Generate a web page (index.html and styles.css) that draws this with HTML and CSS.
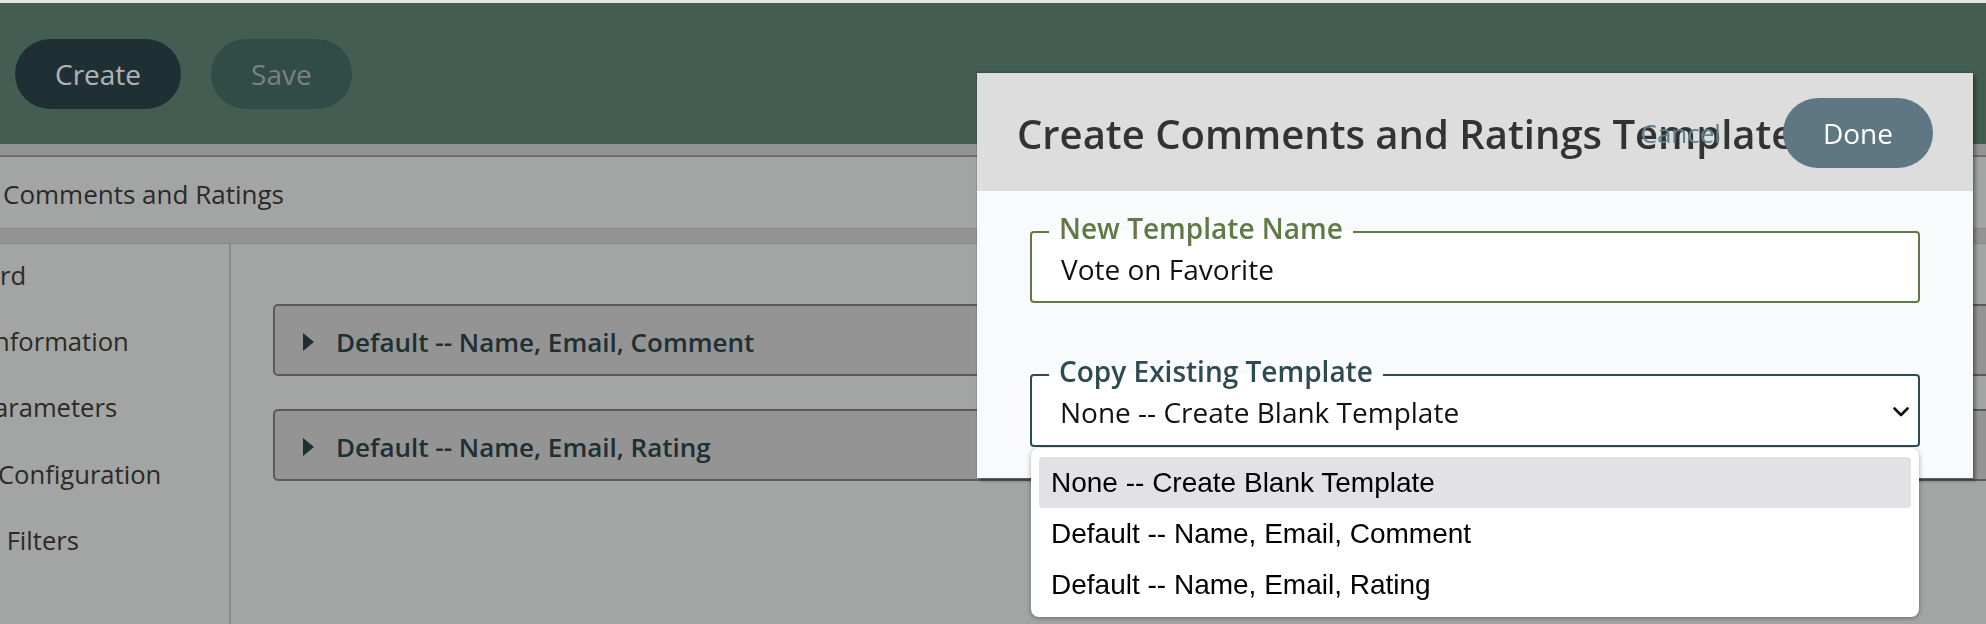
FILE: index.html
```html
<!DOCTYPE html>
<html lang="en">
<head>
<meta charset="utf-8">
<title>Comments and Ratings</title>
<link rel="stylesheet" href="styles.css">
</head>
<body>
  <div class="topstrip"></div>
  <header class="appbar">
    <button class="pill pill-primary">Create</button>
    <button class="pill pill-muted">Save</button>
  </header>
  <div class="subband"></div>
  <div class="pagetitle">Comments and Ratings</div>
  <div class="subband subband-2"></div>
  <main class="workspace">
    <nav class="sidenav">
      <a class="navitem">rd</a>
      <a class="navitem navitem-cut">nformation</a>
      <a class="navitem navitem-cut">arameters</a>
      <a class="navitem navitem-edge">Configuration</a>
      <a class="navitem"> Filters</a>
    </nav>
    <section class="content">
      <div class="acc">
        <svg class="caret" width="11" height="18" viewBox="0 0 11 18"><polygon points="0,0 11,9 0,18" fill="currentColor"/></svg>
        <span>Default -- Name, Email, Comment</span>
      </div>
      <div class="acc">
        <svg class="caret" width="11" height="18" viewBox="0 0 11 18"><polygon points="0,0 11,9 0,18" fill="currentColor"/></svg>
        <span>Default -- Name, Email, Rating</span>
      </div>
    </section>
  </main>

  <div class="backdrop"></div>

  <div class="modal">
    <div class="modal-head">
      <h2 class="modal-title">Create Comments and Ratings Template</h2>
      <button class="link-btn">Cancel</button>
      <button class="pill pill-done">Done</button>
    </div>
    <div class="modal-body">
      <fieldset class="field field-name">
        <legend>New Template Name</legend>
        <div class="textbox">Vote on Favorite</div>
      </fieldset>
      <fieldset class="field field-copy">
        <legend>Copy Existing Template</legend>
        <div class="selectbox">
          <span>None -- Create Blank Template</span>
          <svg class="chevron" width="16" height="10" viewBox="0 0 16 10"><polyline points="1.5,1.5 8,8 14.5,1.5" fill="none" stroke="#111" stroke-width="2.6" stroke-linecap="round" stroke-linejoin="round"/></svg>
        </div>
      </fieldset>
    </div>
  </div>

  <ul class="dropdown">
    <li class="is-active">None -- Create Blank Template</li>
    <li>Default -- Name, Email, Comment</li>
    <li>Default -- Name, Email, Rating</li>
  </ul>
</body>
</html>
```

FILE: styles.css
```css
* { box-sizing: border-box; }

html, body { margin: 0; padding: 0; }

body {
  position: relative;
  width: 1986px;
  height: 624px;
  overflow: hidden;
  font-family: "Open Sans", "Noto Sans", sans-serif;
  font-size: 25.6px;
  background: #e9ecea;
}

.topstrip {
  height: 3px;
  background: #e4e4e4;
}

.appbar {
  height: 141px;
  background: #608678;
  display: flex;
  align-items: center;
  gap: 30px;
  padding-left: 15px;
}

.pill {
  font-family: inherit;
  font-size: 28px;
  height: 70px;
  padding: 0 40px;
  border: none;
  border-radius: 35px;
  flex: none;
}

.pill-primary { background: #2c454a; color: #ffffff; }
.pill-muted { background: #476d65; color: #b1bab7; }

.subband {
  height: 13px;
  background: #d3d3d3;
  border-bottom: 2px solid #9e9e9e;
}

.pagetitle {
  height: 72px;
  padding: 4px 0 0 3px;
  display: flex;
  align-items: center;
  font-size: 26px;
  line-height: 38.4px;
  color: #3c3c3c;
  background: #eaedec;
  border-bottom: 1px solid #c2c2c2;
}

.subband-2 {
  height: 15px;
  border-bottom: 1px solid #c2c2c2;
}

.workspace {
  display: flex;
  height: 380px;
}

.sidenav {
  width: 231px;
  flex: none;
  border-right: 2px solid #c5c5c5;
  padding-top: 13px;
  display: flex;
  flex-direction: column;
  gap: 27.8px;
  line-height: 38.4px;
  color: #403c39;
  white-space: pre;
  overflow: hidden;
}

.navitem-cut { text-indent: -6px; }
.navitem-edge { text-indent: -2px; }

.content {
  flex: 1;
  min-width: 0;
  padding: 60px 0 0 42px;
  display: flex;
  flex-direction: column;
  gap: 33px;
}

.acc {
  flex: none;
  height: 72px;
  margin-right: -40px;
  border: 2px solid #818181;
  border-radius: 5px;
  background: #d4d4d4;
  display: flex;
  align-items: center;
  gap: 22px;
  padding: 4px 0 0 28px;
  font-size: 26px;
  font-weight: 600;
  line-height: 38.4px;
  color: #2c454a;
}

.caret { flex: none; }

.backdrop {
  position: fixed;
  left: 0;
  right: 0;
  top: 3px;
  bottom: 0;
  background: rgba(0, 0, 0, 0.3);
  z-index: 10;
}

.modal {
  position: absolute;
  left: 977px;
  top: 73px;
  width: 996px;
  height: 405px;
  background: #f8fafc;
  box-shadow: 0 0 2px rgba(0, 0, 0, 0.35), 3px 3px 3px rgba(0, 0, 0, 0.3);
  z-index: 20;
  display: flex;
  flex-direction: column;
}

.modal-head {
  flex: none;
  height: 118px;
  background: #dddddd;
  display: flex;
  align-items: center;
  padding: 2px 40px 0;
}

.modal-title {
  margin: 0;
  flex: 1 1 0;
  min-width: 0;
  white-space: nowrap;
  font-size: 40px;
  font-weight: 600;
  color: #333333;
}

.link-btn {
  flex: none;
  background: none;
  border: none;
  padding: 0 23px;
  margin-right: 39px;
  font-family: inherit;
  font-size: 26px;
  color: #62808f;
}

.pill-done { background: #5f7782; color: #ffffff; }

.modal-body {
  padding: 22px 53px 0;
  display: flex;
  flex-direction: column;
  gap: 53px;
}

.field {
  margin: 0;
  padding: 0;
  min-width: 0;
  border: 2px solid;
  border-radius: 4px;
  background: #ffffff;
}

.field legend {
  margin-left: 17px;
  padding: 0 10px 8px;
  font-size: 28px;
  font-weight: 600;
  line-height: 30px;
}

.field-name { border-color: #617a45; }
.field-name legend { color: #617a45; }
.field-copy { border-color: #2e4a52; }
.field-copy legend { color: #2e4a52; }

.textbox {
  height: 36px;
  margin-bottom: 14px;
  padding-left: 29px;
  font-size: 28px;
  line-height: 36px;
  color: #111111;
}

.selectbox {
  height: 36px;
  margin-bottom: 15px;
  padding: 0 9px 0 28px;
  display: flex;
  align-items: center;
  justify-content: space-between;
  font-size: 28px;
  line-height: 36px;
  color: #111111;
}

.chevron { flex: none; }

.dropdown {
  position: absolute;
  left: 1031px;
  top: 448px;
  width: 888px;
  height: 169px;
  margin: 0;
  padding: 9px 8px 7px;
  list-style: none;
  background: #ffffff;
  border-radius: 8px;
  box-shadow: 0 1px 5px rgba(0, 0, 0, 0.35);
  z-index: 30;
  font-family: "Liberation Sans", Arial, sans-serif;
  font-size: 28px;
  color: #000000;
}

.dropdown li {
  height: 51px;
  display: flex;
  align-items: center;
  padding-left: 12px;
  border-radius: 4px;
}

.dropdown .is-active { background: #e1e1e6; }
```
